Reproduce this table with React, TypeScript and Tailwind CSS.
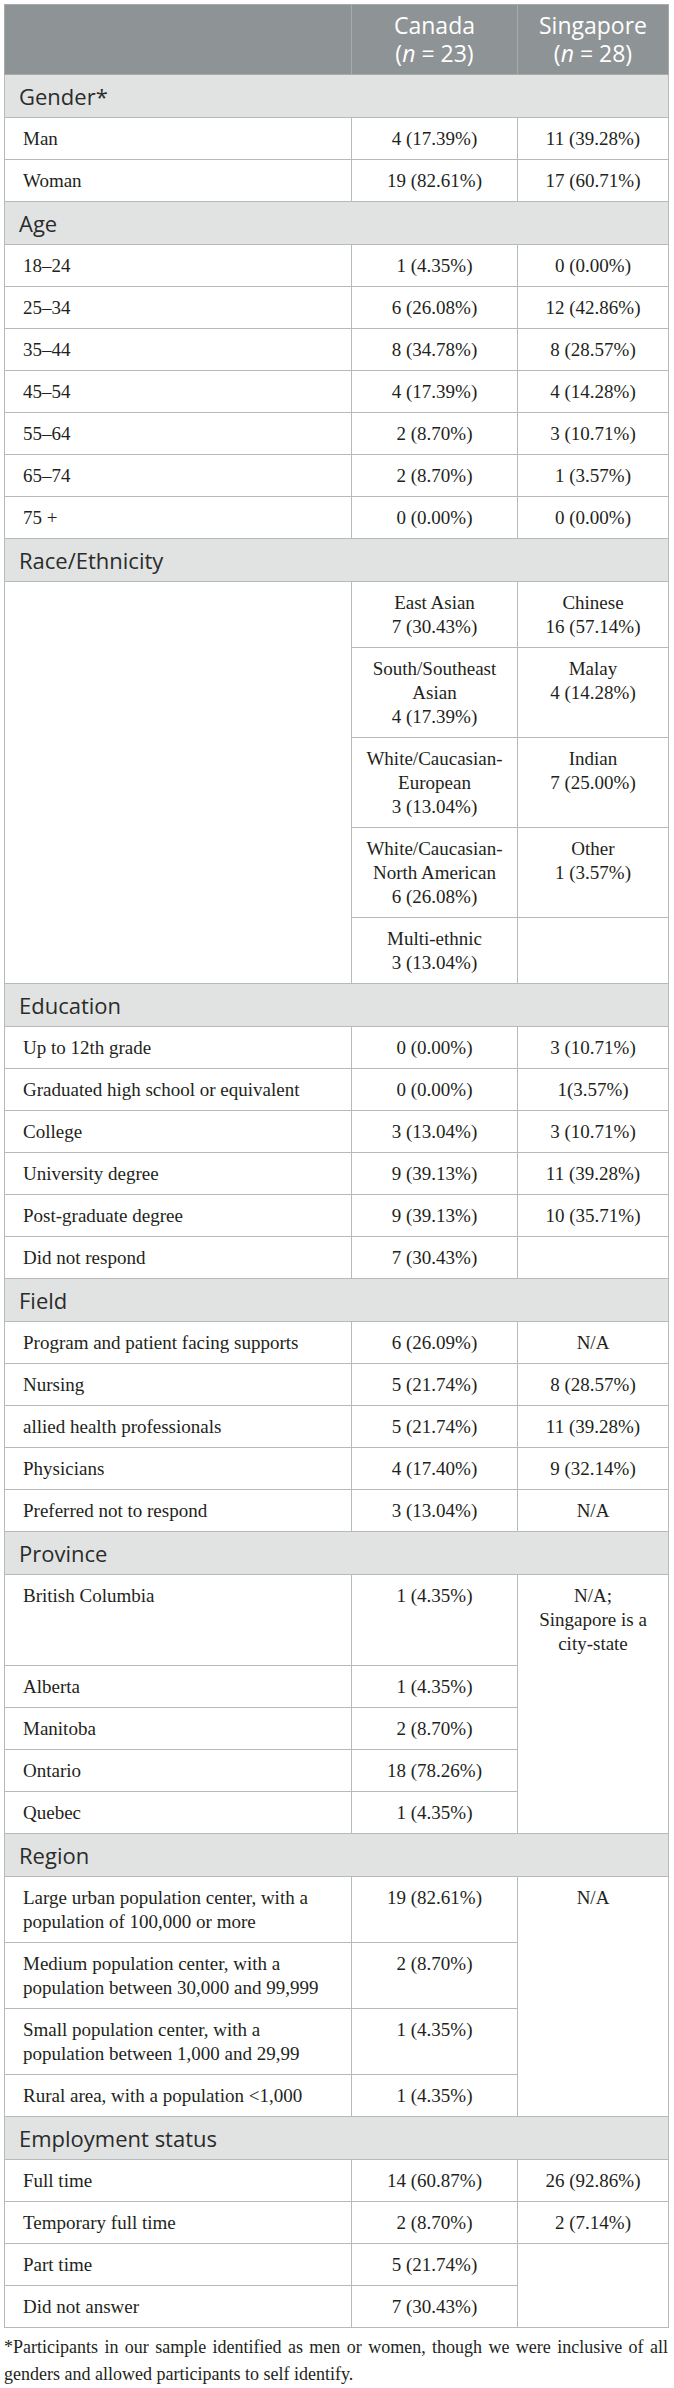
import type { ReactNode } from "react";

const line = "border border-[#b7baba]";
const cell = `${line} align-top pt-[9px] pb-[8px] leading-[24px] text-[19px]`;
const labelCell = `${cell} pl-[18px] pr-[10px] text-left`;
const numCell = `${cell} px-[8px] text-center`;

function Section({ title }: { title: string }) {
  return (
    <tr>
      <td
        colSpan={3}
        className={`${line} bg-[#e1e3e3] pl-[14px] py-[7px] text-left font-['Open_Sans',sans-serif] text-[22px] leading-[28px] text-[#2b2b2b]`}
      >
        {title}
      </td>
    </tr>
  );
}

function Row({ label, ca, sg }: { label: ReactNode; ca: ReactNode; sg?: ReactNode }) {
  return (
    <tr>
      <td className={labelCell}>{label}</td>
      <td className={numCell}>{ca}</td>
      {sg !== undefined && <td className={numCell}>{sg}</td>}
    </tr>
  );
}

function Head({ name, n }: { name: string; n: number }) {
  return (
    <th className="border border-[#a6abac] pt-[6px] pb-[7px] text-center font-normal">
      <div className="h-[28px]">{name}</div>
      <div className="h-[28px]">
        (<i>n</i> = {n})
      </div>
    </th>
  );
}

export default function App() {
  return (
    <div className="w-[674px] bg-white pt-[4px] font-['Liberation_Serif',serif] text-[#231f20]">
      <table className="ml-[4px] w-[664px] table-fixed border-collapse">
        <colgroup>
          <col className="w-[347px]" />
          <col className="w-[166px]" />
          <col className="w-[151px]" />
        </colgroup>
        <thead>
          <tr className="bg-[#8e9395] font-['Open_Sans',sans-serif] text-[23px] font-normal leading-[28px] text-white">
            <th className="border border-[#a6abac] pt-[6px] pb-[7px]" />
            <Head name="Canada" n={23} />
            <Head name="Singapore" n={28} />
          </tr>
        </thead>
        <tbody>
          <Section title="Gender*" />
          <Row label="Man" ca="4 (17.39%)" sg="11 (39.28%)" />
          <Row label="Woman" ca="19 (82.61%)" sg="17 (60.71%)" />

          <Section title="Age" />
          <Row label="18–24" ca="1 (4.35%)" sg="0 (0.00%)" />
          <Row label="25–34" ca="6 (26.08%)" sg="12 (42.86%)" />
          <Row label="35–44" ca="8 (34.78%)" sg="8 (28.57%)" />
          <Row label="45–54" ca="4 (17.39%)" sg="4 (14.28%)" />
          <Row label="55–64" ca="2 (8.70%)" sg="3 (10.71%)" />
          <Row label="65–74" ca="2 (8.70%)" sg="1 (3.57%)" />
          <Row label="75 +" ca="0 (0.00%)" sg="0 (0.00%)" />

          <Section title="Race/Ethnicity" />
          <tr>
            <td rowSpan={5} className={labelCell} />
            <td className={numCell}>
              East Asian
              <br />7 (30.43%)
            </td>
            <td className={numCell}>
              Chinese
              <br />16 (57.14%)
            </td>
          </tr>
          <tr>
            <td className={numCell}>
              South/Southeast
              <br />Asian
              <br />4 (17.39%)
            </td>
            <td className={numCell}>
              Malay
              <br />4 (14.28%)
            </td>
          </tr>
          <tr>
            <td className={numCell}>
              White/Caucasian-
              <br />European
              <br />3 (13.04%)
            </td>
            <td className={numCell}>
              Indian
              <br />7 (25.00%)
            </td>
          </tr>
          <tr>
            <td className={numCell}>
              White/Caucasian-
              <br />North American
              <br />6 (26.08%)
            </td>
            <td className={numCell}>
              Other
              <br />1 (3.57%)
            </td>
          </tr>
          <tr>
            <td className={numCell}>
              Multi-ethnic
              <br />3 (13.04%)
            </td>
            <td className={numCell} />
          </tr>

          <Section title="Education" />
          <Row label="Up to 12th grade" ca="0 (0.00%)" sg="3 (10.71%)" />
          <Row label="Graduated high school or equivalent" ca="0 (0.00%)" sg="1(3.57%)" />
          <Row label="College" ca="3 (13.04%)" sg="3 (10.71%)" />
          <Row label="University degree" ca="9 (39.13%)" sg="11 (39.28%)" />
          <Row label="Post-graduate degree" ca="9 (39.13%)" sg="10 (35.71%)" />
          <Row label="Did not respond" ca="7 (30.43%)" sg="" />

          <Section title="Field" />
          <Row label="Program and patient facing supports" ca="6 (26.09%)" sg="N/A" />
          <Row label="Nursing" ca="5 (21.74%)" sg="8 (28.57%)" />
          <Row label="allied health professionals" ca="5 (21.74%)" sg="11 (39.28%)" />
          <Row label="Physicians" ca="4 (17.40%)" sg="9 (32.14%)" />
          <Row label="Preferred not to respond" ca="3 (13.04%)" sg="N/A" />

          <Section title="Province" />
          <tr>
            <td className={`${labelCell} h-[91px]`}>British Columbia</td>
            <td className={numCell}>1 (4.35%)</td>
            <td rowSpan={5} className={numCell}>
              N/A;
              <br />
              Singapore is a
              <br />
              city-state
            </td>
          </tr>
          <Row label="Alberta" ca="1 (4.35%)" />
          <Row label="Manitoba" ca="2 (8.70%)" />
          <Row label="Ontario" ca="18 (78.26%)" />
          <Row label="Quebec" ca="1 (4.35%)" />

          <Section title="Region" />
          <tr>
            <td className={labelCell}>
              Large urban population center, with a
              <br />
              population of 100,000 or more
            </td>
            <td className={numCell}>19 (82.61%)</td>
            <td rowSpan={4} className={numCell}>
              N/A
            </td>
          </tr>
          <Row
            label={
              <>
                Medium population center, with a
                <br />
                population between 30,000 and 99,999
              </>
            }
            ca="2 (8.70%)"
          />
          <Row
            label={
              <>
                Small population center, with a
                <br />
                population between 1,000 and 29,99
              </>
            }
            ca="1 (4.35%)"
          />
          <Row label="Rural area, with a population <1,000" ca="1 (4.35%)" />

          <Section title="Employment status" />
          <Row label="Full time" ca="14 (60.87%)" sg="26 (92.86%)" />
          <Row label="Temporary full time" ca="2 (8.70%)" sg="2 (7.14%)" />
          <tr>
            <td className={labelCell}>Part time</td>
            <td className={numCell}>5 (21.74%)</td>
            <td rowSpan={2} className={numCell} />
          </tr>
          <Row label="Did not answer" ca="7 (30.43%)" />
        </tbody>
      </table>
      <p className="mx-[4px] mt-[6px] w-[664px] text-justify text-[18px] leading-[27px] text-[#231f20]">
        *Participants in our sample identified as men or women, though we were inclusive of all genders and allowed
        participants to self identify.
      </p>
    </div>
  );
}
